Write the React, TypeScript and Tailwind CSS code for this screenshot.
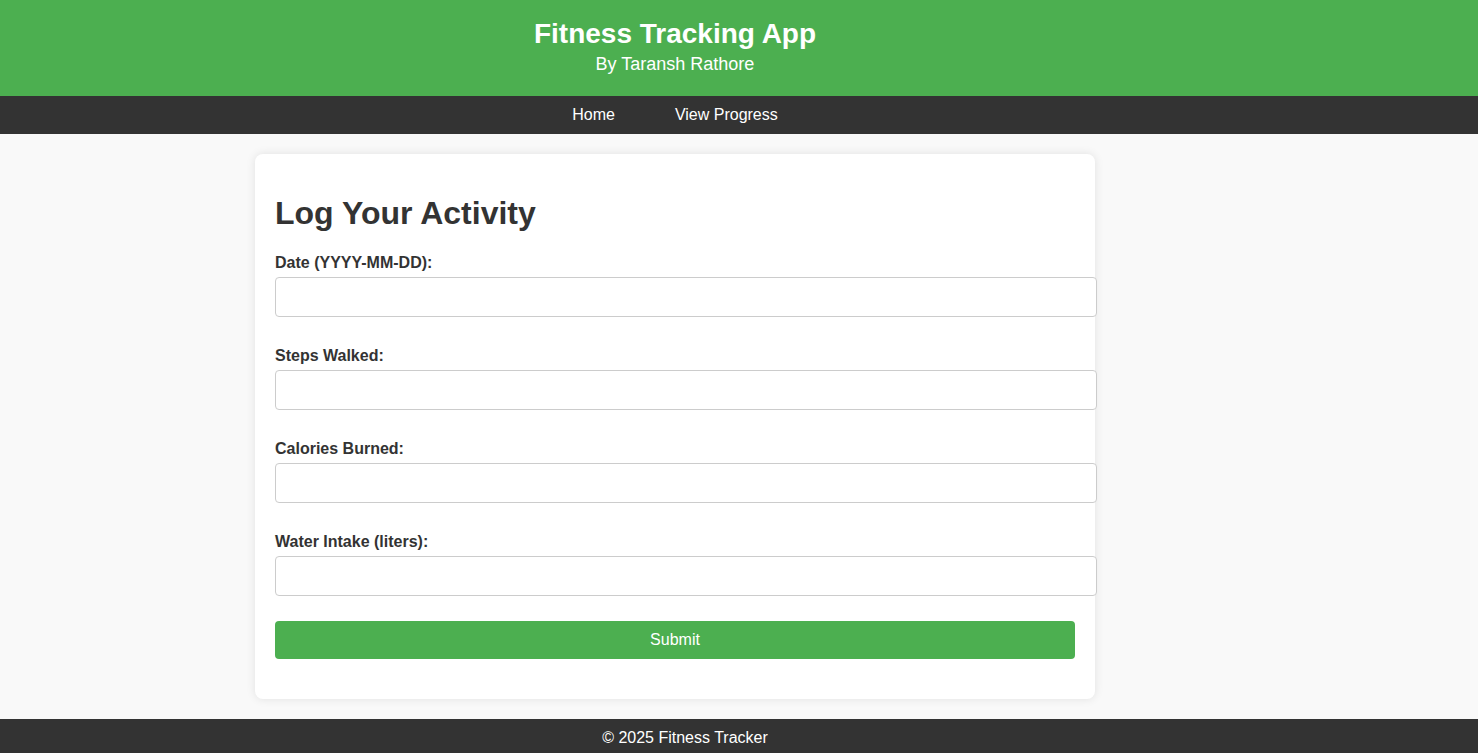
const FIELDS = [
  { id: "date", label: "Date (YYYY-MM-DD):" },
  { id: "steps", label: "Steps Walked:" },
  { id: "calories", label: "Calories Burned:" },
  { id: "water", label: "Water Intake (liters):" },
];

export default function App() {
  return (
    <div className="min-h-screen bg-[#f9f9f9] font-['Liberation_Sans',Arial,sans-serif] text-[#333]">
      {/* Header */}
      <header className="h-[96px] bg-[#4caf50] text-white">
        <div className="w-[1350px] pt-[18px] text-center">
          <h1 className="text-[28px] font-bold leading-[32px]">Fitness Tracking App</h1>
          <p className="mt-[4px] text-[18px] leading-[21px]">By Taransh Rathore</p>
        </div>
      </header>

      {/* Nav */}
      <nav className="h-[38px] bg-[#333]">
        <div className="flex h-full w-[1350px] items-center justify-center gap-[60px] text-[16px] leading-[18px] text-white">
          <a href="#">Home</a>
          <a href="#">View Progress</a>
        </div>
      </nav>

      {/* Main */}
      <main className="pt-5 pb-5">
        <div className="ml-[255px] w-[840px] rounded-lg bg-white p-5 pb-10 shadow-[0_0_10px_rgba(0,0,0,0.1)]">
          <h2 className="mt-[21px] text-[32px] font-bold leading-[37px]">Log Your Activity</h2>
          <form className="mt-[21px]">
            {FIELDS.map((f, i) => (
              <div key={f.id} className={i > 0 ? "mt-[29px]" : ""}>
                <label htmlFor={f.id} className="block pt-[1px] text-[16px] font-bold leading-[18px]">
                  {f.label}
                </label>
                <input
                  id={f.id}
                  type="text"
                  className="mt-[5px] box-content block h-[18px] w-[800px] rounded border border-[#ccc] bg-white px-[10px] py-[10px] text-[16px]"
                />
              </div>
            ))}
            <button
              type="button"
              className="mt-[25px] block h-[38px] w-[800px] rounded bg-[#4caf50] text-[16px] leading-[18px] text-white"
            >
              Submit
            </button>
          </form>
        </div>
      </main>

      {/* Footer */}
      <footer className="h-[38px] bg-[#333] text-white">
        <div className="flex h-full w-[1370px] items-center justify-center text-[16px] leading-[18px]">
          © 2025 Fitness Tracker
        </div>
      </footer>
    </div>
  );
}
